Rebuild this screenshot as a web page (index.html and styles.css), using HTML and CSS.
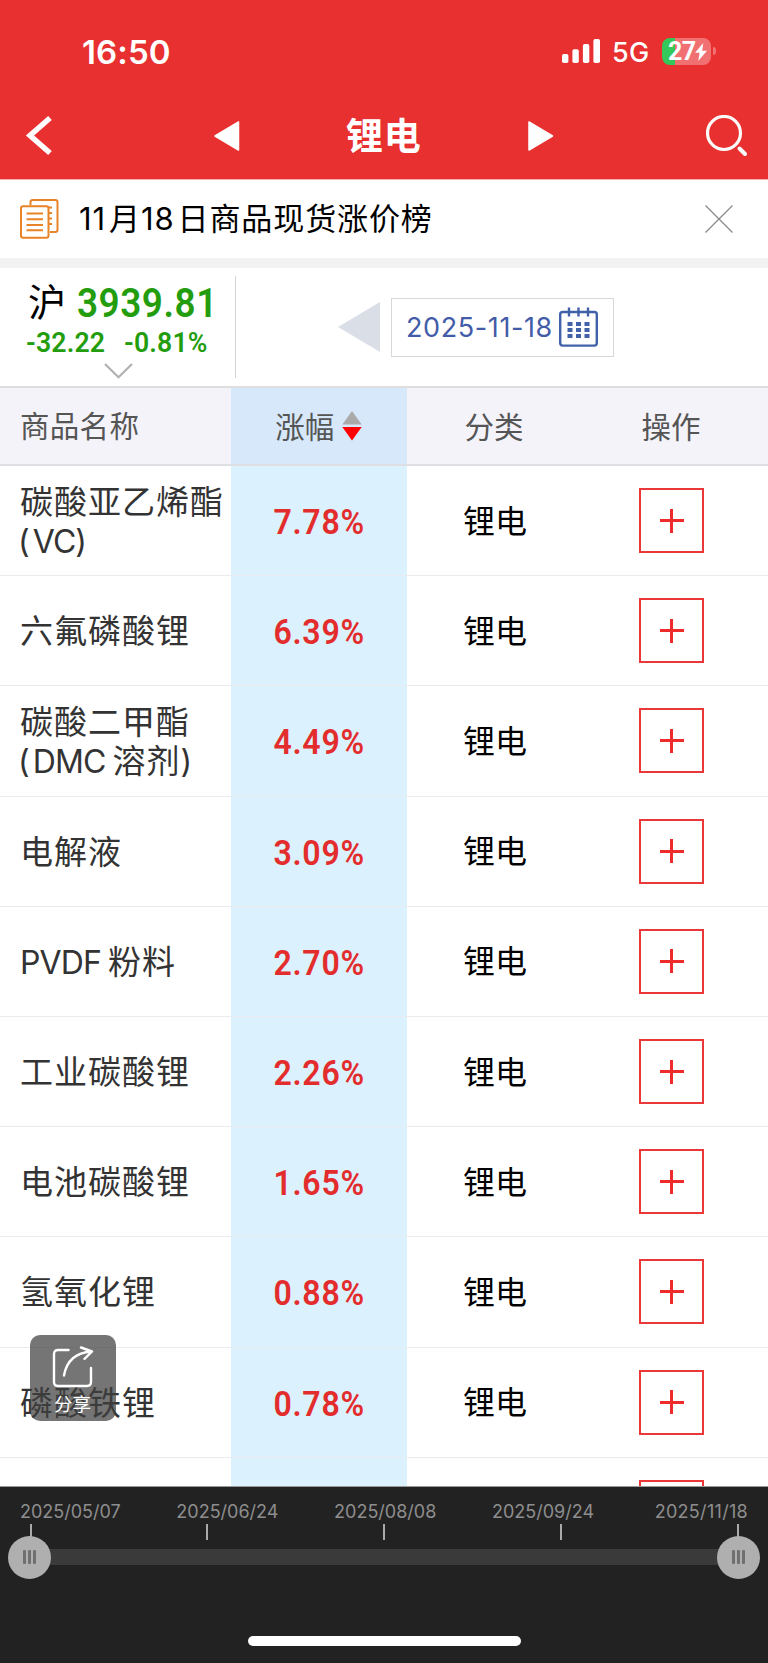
FILE: index.html
```html
<!DOCTYPE html>
<html lang="zh-CN">
<head>
<meta charset="utf-8">
<title>锂电</title>
<link rel="stylesheet" href="styles.css">
</head>
<body>
<div class="app">
  <header class="top">
    <div class="status">
      <span class="clock">16:50</span>
      <div class="status-right">
        <svg class="signal" width="38" height="24" viewBox="0 0 38 24" fill="#fff"><rect x="0" y="15" width="6.4" height="9" rx="1.8"/><rect x="10.4" y="10.3" width="6.4" height="13.7" rx="1.8"/><rect x="20.9" y="5" width="6.4" height="19" rx="1.8"/><rect x="31.4" y="0" width="6.6" height="24" rx="1.8"/></svg>
        <span class="net">5G</span>
        <div class="battery"><span class="level">27</span><svg width="12" height="18" viewBox="0 0 12 18" fill="#fff"><path d="M8.3 0 0 9.7h4.6L3.2 18 12 7.8H7.2z"/></svg></div>
        <i class="battery-cap"></i>
      </div>
    </div>
    <nav class="nav">
      <svg class="back" width="28" height="42" viewBox="0 0 28 42"><path d="M25 3 5 20.500 25 38" fill="none" stroke="#fff" stroke-width="5.500"/></svg>
      <svg class="prev" width="26" height="30" viewBox="0 0 26 30"><path d="M24.500 1v28L1 15z" fill="#fff" stroke="#fff" stroke-width="1.500" stroke-linejoin="round"/></svg>
      <h1 class="title">锂电</h1>
      <svg class="next" width="26" height="30" viewBox="0 0 26 30"><path d="M1 1v28l23.500-14z" fill="#fff" stroke="#fff" stroke-width="1.500" stroke-linejoin="round"/></svg>
      <svg class="search" width="42" height="42" viewBox="0 0 42 42" fill="none" stroke="#fafafa"><circle cx="18" cy="18" r="16.500" stroke-width="3.200"/><path d="m33.500 33.500 5.500 5.500" stroke-width="4" stroke-linecap="round"/></svg>
    </nav>
  </header>

  <section class="news">
    <svg class="news-icon" width="39" height="40" viewBox="0 0 39 40" fill="none" stroke="#e98328" stroke-width="2"><path d="M10.500 6V3.200Q10.500 1 12.700 1h22.600q2.200 0 2.200 2.200v27.500q0 2.200-2.200 2.200H30"/><rect x="1" y="7.200" width="27.500" height="31.500" rx="2.200"/><path d="M6.500 14.500H23M6.500 20.300H23M6.500 26H23M6.500 31.300H23" /><path d="M29 8.500h3M29 14h3M29 19.500h3M29 25h3"/></svg>
    <p class="news-text">11<b>月</b>18<b>日</b>商品现货涨价榜</p>
    <svg class="close" width="28" height="28" viewBox="0 0 28 28" stroke="#888" stroke-width="1.200"><path d="m.5.5 27 27M27.500.5l-27 27"/></svg>
  </section>

  <section class="market">
    <div class="index">
      <div class="index-main"><span class="hu">沪</span><span class="num value">3939.81</span></div>
      <div class="index-sub"><span class="num change">-32.22</span><span class="num change pct">-0.81%</span></div>
      <svg class="chevron" width="29" height="16" viewBox="0 0 29 16" fill="none" stroke="#b1b1b1" stroke-width="2.200"><path d="m1 1 13.500 13.200L28 1"/></svg>
    </div>
    <svg class="date-prev" width="42" height="50" viewBox="0 0 42 50"><path d="M42 0v50L0 25z" fill="#dadfe7"/></svg>
    <div class="date-box">
      <span>2025-11-18</span>
      <svg width="39" height="40" viewBox="0 0 39 40" fill="none" stroke="#4162a8" stroke-width="2.400"><rect x="1.200" y="5" width="36.600" height="33.600" rx="2.500"/><path d="M10 .5v9M19.500.5v9M29 .5v9"/><path d="M8.500 17h22M8.500 23h22M8.500 29h22" stroke-width="4" stroke-dasharray="5 3.500"/></svg>
    </div>
  </section>

  <main class="table">
    <div class="row head">
      <div class="name">商品名称</div>
      <div class="rate"><span>涨幅</span><svg width="20" height="30" viewBox="0 0 20 30"><path d="M10 0l9.700 13.500H.3z" fill="#aaa"/><path d="M10 29.500.3 16h19.400z" fill="red"/></svg></div>
      <div class="kind">分类</div>
      <div class="act"><span>操作</span></div>
    </div>
    <div class="row"><div class="name">碳酸亚乙烯酯<br><span class="latin paren">(<i class="gap-s"></i>VC)</span></div><div class="rate"><span class="num">7.78%</span></div><div class="kind">锂电</div><div class="act"><button class="add"></button></div></div>
    <div class="row"><div class="name">六氟磷酸锂</div><div class="rate"><span class="num">6.39%</span></div><div class="kind">锂电</div><div class="act"><button class="add"></button></div></div>
    <div class="row"><div class="name">碳酸二甲酯<br><span class="latin paren">(<i class="gap-s"></i>DMC</span><i class="gap"></i>溶剂<span class="latin">)</span></div><div class="rate"><span class="num">4.49%</span></div><div class="kind">锂电</div><div class="act"><button class="add"></button></div></div>
    <div class="row"><div class="name">电解液</div><div class="rate"><span class="num">3.09%</span></div><div class="kind">锂电</div><div class="act"><button class="add"></button></div></div>
    <div class="row"><div class="name"><span class="latin">PVDF</span><i class="gap"></i>粉料</div><div class="rate"><span class="num">2.70%</span></div><div class="kind">锂电</div><div class="act"><button class="add"></button></div></div>
    <div class="row"><div class="name">工业碳酸锂</div><div class="rate"><span class="num">2.26%</span></div><div class="kind">锂电</div><div class="act"><button class="add"></button></div></div>
    <div class="row"><div class="name">电池碳酸锂</div><div class="rate"><span class="num">1.65%</span></div><div class="kind">锂电</div><div class="act"><button class="add"></button></div></div>
    <div class="row"><div class="name">氢氧化锂</div><div class="rate"><span class="num">0.88%</span></div><div class="kind">锂电</div><div class="act"><button class="add"></button></div></div>
    <div class="row"><div class="name">磷酸铁锂</div><div class="rate"><span class="num">0.78%</span></div><div class="kind">锂电</div><div class="act"><button class="add"></button></div></div>
    <div class="row"><div class="name"></div><div class="rate"></div><div class="kind"></div><div class="act"><button class="add"></button></div></div>
    <div class="share">
      <svg width="42" height="42" viewBox="0 0 42 42" fill="none" stroke="#fff" stroke-width="2.400" stroke-linecap="round" stroke-linejoin="round"><path d="M16.500 4H6Q2 4 2 8v28q0 4 4 4h29q4 0 4-4V22"/><path d="M12 29.500Q16 7 39.500 5.500M29 1.500l11 4-7.500 7.300"/></svg>
      <span>分享</span>
    </div>
  </main>

  <footer class="timeline">
    <div class="dates"><span>2025/05/07</span><span>2025/06/24</span><span>2025/08/08</span><span>2025/09/24</span><span>2025/11/18</span></div>
    <div class="ticks"><i></i><i></i><i></i><i></i><i></i></div>
    <div class="track">
      <div class="knob"><i></i><i></i><i></i></div>
      <div class="knob"><i></i><i></i><i></i></div>
    </div>
    <div class="home"></div>
  </footer>
</div>
</body>
</html>
```
FILE: styles.css
```css
* { box-sizing: border-box; margin: 0; padding: 0; }
body { background: #fff; font-family: Inter, "Noto Sans CJK SC", sans-serif; color: #000; }
svg { display: block; flex: none; }
.app { width: 768px; height: 1663px; display: flex; flex-direction: column; overflow: hidden; }
.num { font-family: Roboto, sans-serif; font-weight: 600; white-space: nowrap; }

.top { height: 180px; flex: none; background: #e83030; border-bottom: 1px solid #f6adad; color: #fff; }
.status { height: 102px; display: flex; justify-content: space-between; padding: 0 52px 0 82px; }
.clock { font-size: 33px; font-weight: 600; line-height: 40px; margin-top: 32px; letter-spacing: 0.1px; }
.status-right { display: flex; align-items: flex-start; padding-top: 38px; }
.signal { margin-top: 1px; }
.net { font-size: 27px; font-weight: 450; line-height: 28px; margin: 0 0 0 12px; width: 50px; padding-top: 1px; letter-spacing: 0.3px; }
.battery { width: 49px; height: 27px; border-radius: 8px; background: linear-gradient(90deg, #34c759 13px, #f17172 13px); display: flex; align-items: center; padding-left: 6px; }
.level { font-family: Roboto, sans-serif; font-size: 25px; font-weight: 700; letter-spacing: -0.6px; line-height: 27px; width: 27px; }
.battery-cap { width: 3px; height: 8px; margin: 9px 0 0 2px; border-radius: 0 3px 3px 0; background: #f17172; }
.nav { height: 68px; display: flex; align-items: center; padding: 0 20px 0 25px; }
.prev { margin-left: 161px; }
.title { margin-left: 106px; padding-top: 2px; width: 78px; font-size: 37px; font-weight: 700; line-height: 50px; letter-spacing: 0.8px; white-space: nowrap; }
.next { margin-left: 104px; }
.search { margin-left: auto; }

.news { height: 88px; flex: none; display: flex; align-items: center; border-bottom: 10px solid #f2f2f2; padding: 0 35px 0 20px; }
.news-text { font-size: 31px; line-height: 44px; margin-left: 20px; letter-spacing: 0.9px; white-space: nowrap; }
.news-text b { font-weight: 400; margin: 0 0 0 3px; }
.close { margin-left: auto; }

.market { height: 118px; flex: none; display: flex; align-items: center; }
.index { width: 236px; height: 102px; border-right: 1px solid #d5d5d5; }
.index-main { display: flex; padding: 2px 0 0 28px; height: 52px; line-height: 52px; }
.hu { font-size: 38px; line-height: 49px; width: 49px; }
.value { color: #239d0e; font-size: 41px; line-height: 51px; letter-spacing: 0.600px; transform: scaleX(0.900); transform-origin: left; }
.index-sub { display: flex; height: 30px; line-height: 30px; padding-left: 26px; color: #239d0e; font-size: 28px; }
.change { width: 98px; letter-spacing: 0.200px; transform: scaleX(0.950); transform-origin: left; }
.chevron { margin: 5px 0 0 104px; }
.date-prev { margin-left: 102px; }
.date-box { margin-left: 11px; width: 223px; height: 59px; border: 1px solid #d8d8d8; display: flex; align-items: center; padding-left: 14px; color: #425ca8; font-size: 27px; }
.date-box span { width: 153px; letter-spacing: 0.600px; white-space: nowrap; }

.table { flex: none; height: 1100px; position: relative; overflow: hidden; }
.row { height: 110.200px; display: grid; grid-template-columns: 230.500px 176.500px 176px 185px; border-bottom: 1.200px solid #e9ebee; }
.row > div { display: flex; align-items: center; }
.head { height: 80px; border-top: 2px solid #dedede; border-bottom: 2px solid #dedfe3; background: #f4f3fa; color: #555; font-size: 29.500px; }
.row .name { display: block; align-self: center; padding: 2px 0 0 20px; font-size: 33px; line-height: 39px; letter-spacing: 1px; color: #333; white-space: nowrap; }
.head .name { padding-top: 0; font-size: 29.500px; letter-spacing: 0.300px; color: #555; }
.gap { display: inline-block; width: 7px; }
.gap-s { display: inline-block; width: 4px; }
.name .latin { font-size: 32px; letter-spacing: -0.900px; }
.name .paren { margin-left: -2px; }
.rate { background: #dcf1fe; justify-content: center; color: #e32d2d; }
.rate .num { font-size: 34.500px; letter-spacing: 0.800px; padding: 3px 0 0 1px; transform: scaleX(0.930); }
.head .rate { background: #d6e8f9; color: #555; gap: 8px; }
.head .rate span, .head .act span { padding-bottom: 3px; }
.row .kind { justify-content: center; font-size: 32px; padding-bottom: 4px; }
.head .kind { font-size: 29.500px; padding: 0 2px 3px 0; }
.row .act { padding-left: 56px; }
.head .act { padding-left: 58.500px; }
.add { width: 65px; height: 65px; border: 2px solid #ea3838; background: linear-gradient(#ee2c2c, #ee2c2c) center / 24px 3px no-repeat, linear-gradient(#ee2c2c, #ee2c2c) center / 3px 24px no-repeat, #fff; }
.share { position: absolute; left: 30px; top: 949px; width: 86px; height: 86px; border-radius: 10px; background: rgba(64, 64, 64, 0.720); display: flex; flex-direction: column; align-items: center; padding-top: 11px; color: #fff; }
.share span { font-size: 18.500px; line-height: 28px; margin-top: 2px; margin-left: -1px; }

.timeline { flex: none; height: 177px; background: #222; padding-top: 13px; border-top: 1px solid #999; }
.dates { display: flex; justify-content: space-between; padding: 0 20px 0 20px; font-size: 18px; line-height: 24px; letter-spacing: 0; color: #8e8e8e; }
.dates span:nth-child(n+2) { margin-left: -2px; }
.dates span:last-child { letter-spacing: 0.300px; margin-left: 3px; }
.ticks { display: flex; justify-content: space-between; padding: 0 29.500px; height: 16px; }
.ticks i { width: 2px; height: 16px; background: #aaa; }
.track { margin: 9px 29px 0; height: 16px; background: #3a3a3a; display: flex; justify-content: space-between; align-items: center; }
.knob { width: 43px; height: 43px; flex: none; border-radius: 50%; background: #afafaf; display: flex; align-items: center; justify-content: center; gap: 2.600px; margin: 0 -21px; }
.knob i { width: 2.700px; height: 14px; border-radius: 1px; background: #707070; }
.home { width: 273px; height: 10px; border-radius: 5px; background: #fff; margin: 71px auto 0; }
```
